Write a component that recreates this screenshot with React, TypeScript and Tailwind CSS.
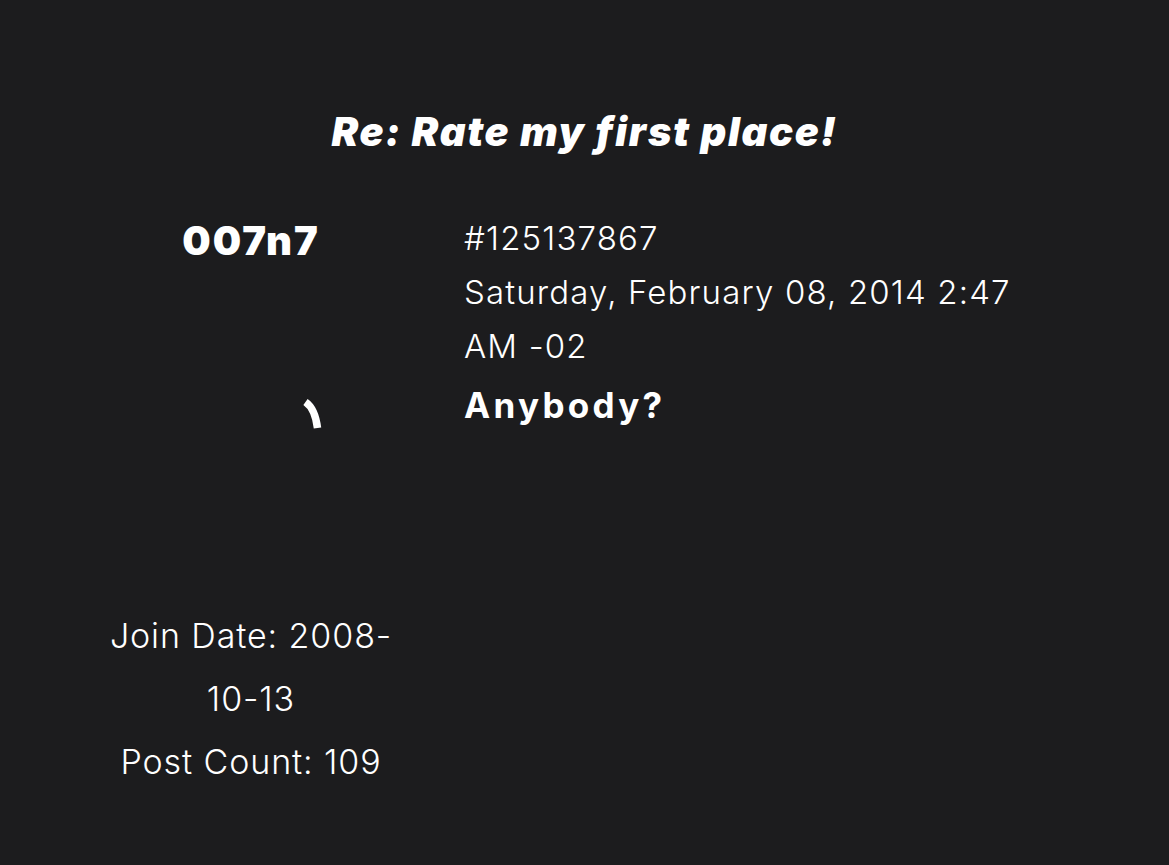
export default function App() {
  return (
    <div className="min-h-screen bg-[#1c1c1e] text-white font-['Inter',sans-serif]">
      <h1 className="pt-[108px] text-center text-[40px] leading-[48px] font-black italic tracking-[1.7px]">
        Re: Rate my first place!
      </h1>

      <div className="flex pt-[55px]">
        {/* Author column */}
        <div className="ml-[101px] w-[300px] flex flex-col items-center text-center pt-[6px]">
          <div className="text-[40px] leading-[48px] font-black tracking-[2px]">007n7</div>
          <div className="w-full h-[339px]">
            <svg width="300" height="339" viewBox="0 0 300 339" fill="none">
              <path
                d="M204.5 137 Q214 143.5 216.5 163"
                stroke="white"
                strokeWidth="7.5"
              />
            </svg>
          </div>
          <div className="text-[34px] leading-[63px] font-light tracking-[0.9px]">
            <p>Join Date: 2008-10-13</p>
            <p>Post Count: 109</p>
          </div>
        </div>

        {/* Post column */}
        <div className="ml-[63px] w-[590px] text-[33px] leading-[54px] font-light tracking-[1.15px]">
          <p>#125137867</p>
          <p>Saturday, February 08, 2014 2:47 AM -02</p>
          <p className="mt-[5px] text-[35px] font-bold tracking-[3.3px]">Anybody?</p>
        </div>
      </div>
    </div>
  );
}
